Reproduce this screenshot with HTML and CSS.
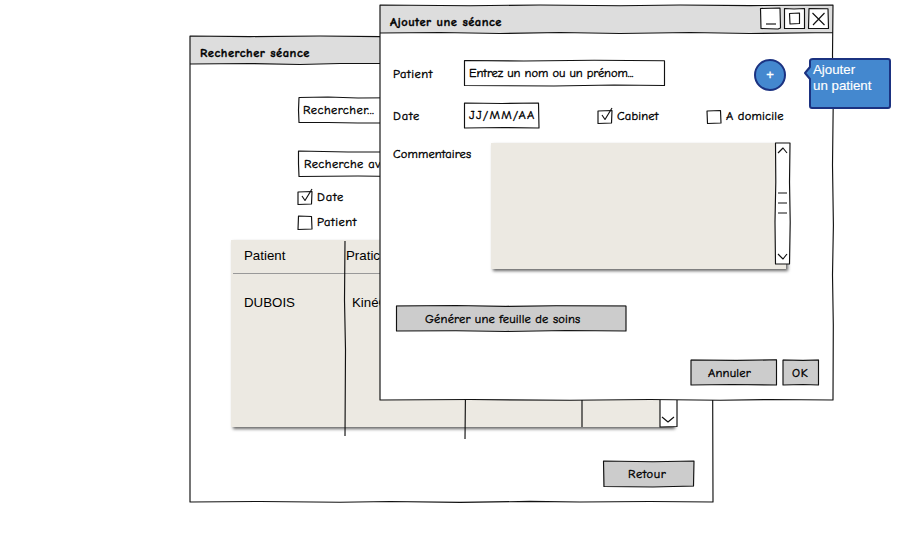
FILE: index.html
```html
<!DOCTYPE html>
<html lang="fr">
<head>
<meta charset="utf-8">
<title>Ajouter une séance</title>
<link rel="stylesheet" href="styles.css">
</head>
<body>
<main class="desktop">
  <section class="window search-window">
    <svg class="frame" viewBox="0 0 523 466"><path d="M0 0L60 .6L130 0L190 .6L300 0H523V180L522.500 300L523 466L460 465.500L390 466L340 465.400L270 466.400L200 465.500L150 466.300L70 465.500L0 466ZM0 28L60 27.500L110 28.500L150 27.500H523"/></svg>
    <header class="titlebar"><h2 class="t-search">Rechercher séance</h2></header>
    <div class="search-body">
      <div class="field search-field"><svg class="frame" viewBox="0 0 140 26"><path d="M1 .5L30 0L60 1L140 .5V26L60 26L30 25.500H1L.5 13Z"/></svg><span class="t-rech">Rechercher...</span></div>
      <div class="field advanced-field"><svg class="frame" viewBox="0 0 140 26"><path d="M.5 0L50 1H140V26L60 25L1 25.500L.5 13Z"/></svg><span class="t-adv">Recherche avancée</span></div>
      <div class="check"><svg class="box" viewBox="0 0 18 18"><path d="M1 4L15 3.500L14.500 16L1 16.500Z"/><path d="M5 8L8 12.500L15 1"/></svg><span class="t-date">Date</span></div>
      <div class="check"><svg class="box" viewBox="0 0 18 18"><path d="M1.500 3L14.500 3.500L15 16L1 16.500Z"/></svg><span class="t-patient">Patient</span></div>
    </div>
    <div class="table">
      <div class="row head"><span>Patient</span><span>Praticien</span></div>
      <div class="row"><span>DUBOIS</span><span class="kine">KinéC</span></div>
      <svg class="rules" viewBox="0 0 450 202"><path d="M114 1L113.500 60L114.500 110L114 196M234 120L234.500 150L234 199M351 120V187"/><path class="fill" d="M429 120V187L446 186.500V120"/><path d="M431 177L437 182L443 177"/></svg>
    </div>
    <footer class="search-footer"><button class="btn back"><svg class="frame" viewBox="0 0 91 26"><path d="M.5 0L50 .7L91 0L90.500 25L50 26L1 25.500Z"/></svg><span class="t-back">Retour</span></button></footer>
  </section>

  <section class="window dialog">
    <svg class="frame" viewBox="0 0 453 395"><path d="M0 0L90 .7L160 0L240 .8L300 0L370 .6L453 0L452.500 50L453.200 100L452.500 160L453.400 220L452.500 270L453.300 320L453 395L390 394.500L340 395.300L270 394.500L190 395.300L90 394.500L0 395ZM0 28L60 27.500L120 28.500L180 27.500L240 28.500L310 27.500L370 28.500L453 27.500"/></svg>
    <header class="titlebar"><h2 class="t-add">Ajouter une séance</h2>
      <div class="controls">
        <svg viewBox="0 0 21 22"><path class="fill" d="M.5 .5L20 0L20.500 20L18 21L1 20.500Z"/><path d="M6 16H16"/></svg>
        <svg viewBox="0 0 21 22"><path class="fill" d="M.5 .5L10 1L20.500 .5V20.500H.5Z"/><path d="M5.500 5.500L15.500 5V15.500L6 16Z"/></svg>
        <svg viewBox="0 0 21 22"><path class="fill" d="M1 .5L20 .8L20.500 20.500H.5Z"/><path d="M4.500 5L16.500 17M16.500 5L5 17"/></svg>
      </div>
    </header>
    <div class="form-row name-row">
      <label class="label t-patient">Patient</label>
      <div class="field name-field"><svg class="frame" viewBox="0 0 201 26"><path d="M.5 .5L60 1L130 .3L200.500 .7V25.500L150 25L90 26L.5 25.500Z"/></svg><span class="t-name">Entrez un nom ou un prénom...</span></div>
      <button class="add">+</button>
    </div>
    <div class="form-row date-row">
      <label class="label t-date">Date</label>
      <div class="field date-field"><svg class="frame" viewBox="0 0 75 26"><path d="M.5 1L38 1.500L74.500 1L75 26L40 25.500L.5 26Z"/></svg><span class="t-format">JJ/MM/AA</span></div>
      <div class="check cabinet"><svg class="box" viewBox="0 0 18 18"><path d="M1 4L15 3.500L14.500 16L1 16.500Z"/><path d="M5 8L8 12.500L15 1"/></svg><span class="t-cab">Cabinet</span></div>
      <div class="check home"><svg class="box" viewBox="0 0 18 18"><path d="M1 4L14.500 3.500L15 16L1.500 16.500Z"/></svg><span class="t-home">A domicile</span></div>
    </div>
    <div class="form-row comment-row">
      <label class="label">Commentaires</label>
      <div class="comment"></div>
      <svg class="scroll" viewBox="0 0 18 124"><path class="fill" d="M1.500 1H16L15.500 40L16.200 80L15.500 122H1.500L1 80L1.800 40Z"/><path d="M4 11L9 6L13 11M4 51H13M4 61H13M4 71H13M4 112L9 117L13 112"/></svg>
    </div>
    <button class="btn generate"><svg class="frame" viewBox="0 0 230 26"><path d="M.5 1L60 .5L110 1.500L160 .8L230 1V26L170 25.500L110 26.500L60 25.800L.5 26Z"/></svg><span class="t-gen">Générer une feuille de soins</span></button>
    <footer class="actions">
      <button class="btn cancel"><svg class="frame" viewBox="0 0 86 26"><path d="M0 1L45 1.500L85.500 .8V26L40 25.500L0 26Z"/></svg><span class="t-cancel">Annuler</span></button>
      <button class="btn ok"><svg class="frame" viewBox="0 0 36 26"><path d="M0 1L20 1.500L35.500 1V26L20 25.500L0 26Z"/></svg><span class="t-ok">OK</span></button>
    </footer>
  </section>

  <aside class="tooltip"><svg class="frame" viewBox="0 0 86 51"><path d="M8 1H83Q85 1 85 3V48Q85 50 83 50H7Q5 50 5 48V21L0 15L5 9V3Q5 1 8 1Z"/></svg><span>Ajouter<br>un patient</span></aside>
</main>
</body>
</html>
```

FILE: styles.css
```css
* { box-sizing: border-box; }
body { margin: 0; background: #fff; color: #000; font: 500 12.5px/16px "Comic Sans MS", "Comic Neue", "Noto Sans", sans-serif; font-variant-ligatures: none; }
.desktop { position: relative; width: 924px; height: 559px; overflow: hidden; -webkit-text-stroke: .35px currentColor; }
button { border: 0; padding: 0; font: inherit; color: inherit; }
svg { overflow: visible; fill: none; stroke: #111; stroke-width: 1.15; stroke-linejoin: round; }
.frame { position: absolute; inset: 0; width: 100%; height: 100%; }
.fill { fill: #fff; }
span { position: relative; white-space: nowrap; }
.window { position: absolute; display: flex; flex-direction: column; background: #fff; }
.search-window { left: 190px; top: 36px; width: 523px; height: 466px; }
.dialog { left: 380px; top: 5px; width: 453px; height: 395px; }
.titlebar { height: 28px; flex: none; display: flex; justify-content: space-between; padding: 3px 4px 0 10px; background: #ddd; }
h2 { margin: 6px 0 0; font-size: 12.5px; line-height: 16px; font-weight: 700; white-space: nowrap; position: relative; letter-spacing: .5px; }
.controls { display: flex; gap: 3px; position: relative; }
.controls svg { width: 21px; height: 22px; }
.field { position: relative; display: flex; align-items: center; height: 26px; padding: 0 0 1px 5px; background: #fff; flex: none; }
.t-rech { letter-spacing: .45px; }
.t-adv { letter-spacing: .4px; }
.t-format { letter-spacing: 1.2px; }
.t-cab { letter-spacing: .15px; }
.t-home { letter-spacing: .2px; }
.t-gen { letter-spacing: .17px; }
.t-cancel { letter-spacing: .2px; }
.t-back, .t-ok { letter-spacing: .6px; }
.search-body { height: 176px; padding: 33px 0 0 108px; flex: none; }
.search-field, .advanced-field { width: 140px; }
.advanced-field { margin: 28px 0 7px; padding-left: 6px; }
.check { display: flex; align-items: center; height: 25px; gap: 2px; }
.box { width: 18px; height: 18px; flex: none; margin-left: -1px; }
.table { position: relative; width: 442px; height: 187px; margin-left: 41px; background: #ece9e2; box-shadow: 2px 2px 3px #666; font: 13.3px/16px "Liberation Sans", sans-serif; flex: none; -webkit-text-stroke: 0; }
.row { display: grid; grid-template-columns: 102px 1fr; padding-left: 13px; height: 34px; align-items: center; }
.head { border-bottom: 1px solid #999; margin-left: 2px; padding: 0 0 2px 11px; }
.row + .row { margin-top: 12px; }
.kine { padding-left: 6px; }
.rules { position: absolute; left: 0; top: 0; width: 450px; height: 202px; }
.search-footer { display: flex; justify-content: flex-end; padding: 34px 19px 0 0; }
.btn { position: relative; height: 26px; background: #ccc; text-align: left; display: flex; align-items: center; flex: none; }
.dialog .btn { padding-top: 2px; }
.back { width: 91px; padding-left: 25px; }
.form-row { display: flex; padding-left: 13px; flex: none; }
.label { width: 71px; position: relative; white-space: nowrap; letter-spacing: .12px; }
.t-patient { letter-spacing: .55px; }
.t-date { letter-spacing: .8px; }
.name-row { align-items: flex-start; height: 32px; margin: 26px 0 11px; }
.name-row .label { margin-top: 7px; }
.name-row .field { margin-top: 1px; }
.name-field { width: 201px; }
.t-name { letter-spacing: -.05px; }
.add { width: 32px; height: 32px; margin-left: 89px; border: 2px solid #1b3281; border-radius: 50%; background: #4488cf; color: #fff; font: 13px/28px "Liberation Sans", sans-serif; }
.date-row { height: 26px; align-items: center; }
.date-row .label { padding-top: 2px; }
.date-row .check { padding-top: 1px; }
.date-field { width: 75px; }
.cabinet { width: 109px; margin-left: 59px; }
.comment-row { margin-top: 15px; height: 126px; }
.comment-row .label { width: 98px; margin-top: 3px; flex: none; }
.comment { width: 295px; height: 126px; background: #ece9e2; box-shadow: 2px 2px 3px #666; flex: none; }
.scroll { width: 18px; height: 124px; position: relative; margin-left: -12px; margin-top: -1px; flex: none; }
.generate { width: 230px; margin: 36px 0 0 16px; padding-left: 29px; }
.actions { display: flex; gap: 6px; padding: 28px 0 0 311px; }
.cancel { width: 86px; padding-left: 17px; }
.ok { width: 36px; padding-left: 9px; }
.tooltip { position: absolute; left: 805px; top: 58px; width: 86px; height: 51px; padding: 4px 0 0 8px; color: #fff; font: 13.3px/16px "Liberation Sans", sans-serif; -webkit-text-stroke: .15px #fff; }
.tooltip path { fill: #4488cf; stroke: #1b3281; stroke-width: 2; }
```
